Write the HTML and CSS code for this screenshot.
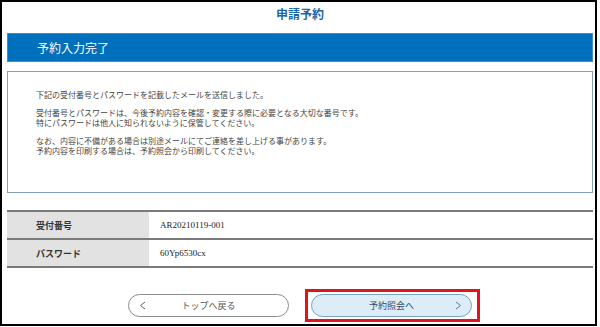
FILE: index.html
```html
<!DOCTYPE html>
<html lang="ja">
<head>
  <meta charset="UTF-8">
  <meta name="viewport" content="width=device-width, initial-scale=1.0">
  <title>申請予約</title>
  <link rel="stylesheet" href="styles.css">
</head>
<body>
  <div class="frame">
    <h1 class="page-title">申請予約</h1>

    <h2 class="bar">予約入力完了</h2>

    <div class="notice">
      <p>下記の受付番号とパスワードを記載したメールを送信しました。</p>
      <p>受付番号とパスワードは、今後予約内容を確認・変更する際に必要となる大切な番号です。<br>特にパスワードは他人に知られないように保管してください。</p>
      <p>なお、内容に不備がある場合は別途メールにてご連絡を差し上げる事があります。<br>予約内容を印刷する場合は、予約照会から印刷してください。</p>
    </div>

    <table class="result">
      <tr>
        <th>受付番号</th>
        <td>AR20210119-001</td>
      </tr>
      <tr>
        <th>パスワード</th>
        <td>60Yp6530cx</td>
      </tr>
    </table>

    <div class="actions">
      <a class="btn btn-back" href="#">
        <svg class="arrow" width="7" height="9" viewBox="0 0 7 9"><path d="M6 1 L1.5 4.5 L6 8" fill="none" stroke="currentColor" stroke-width="1"/></svg>
        トップへ戻る
      </a>
      <div class="highlight">
        <a class="btn btn-next" href="#">
          予約照会へ
          <svg class="arrow" width="7" height="9" viewBox="0 0 7 9"><path d="M1 1 L5.5 4.5 L1 8" fill="none" stroke="currentColor" stroke-width="1"/></svg>
        </a>
      </div>
    </div>
  </div>
</body>
</html>
```

FILE: styles.css
```css
body {
  margin: 0;
  background-color: #fff;
  font-family: "Noto Sans CJK JP", "Noto Sans", sans-serif;
  color: #333;
}

.frame {
  width: 597px;
  height: 326px;
  box-sizing: border-box;
  border: 2px solid #000;
  padding: 0 2px 0 5px;
}

.page-title {
  margin: 0;
  padding: 2px 0 9px;
  font-size: 12px;
  line-height: 20px;
  font-weight: bold;
  text-align: center;
  color: #1b66a8;
}

.bar {
  margin: 0;
  height: 29px;
  box-sizing: border-box;
  padding-left: 29px;
  font-size: 12px;
  font-weight: normal;
  line-height: 27px;
  color: #fff;
  background-color: #0070bd;
  border: 1px solid #3d8ccb;
}

.notice {
  margin-top: 9px;
  height: 122px;
  box-sizing: border-box;
  border: 1px solid #7fa2b8;
  padding: 18px 28px 0;
}

.notice p {
  margin: 0 0 8px;
  font-size: 8px;
  line-height: 10px;
  color: #444;
}

.result {
  width: 100%;
  margin-top: 17px;
  border-collapse: collapse;
  border-top: 2px solid #7a7a7a;
}

.result th,
.result td {
  height: 26px;
  padding: 0;
  border-bottom: 2px solid #7a7a7a;
  font-size: 9px;
  text-align: left;
}

.result th {
  width: 142px;
  padding-left: 29px;
  box-sizing: border-box;
  background-color: #e2e2e2;
  font-weight: bold;
  color: #333;
}

.result td {
  padding-left: 11px;
  font-family: "Liberation Serif", serif;
  color: #222;
}

.actions {
  display: flex;
  justify-content: center;
  gap: 22px;
  margin-top: 26px;
}

.btn {
  position: relative;
  display: block;
  width: 161px;
  height: 23px;
  box-sizing: border-box;
  border-radius: 12px;
  font-size: 9px;
  line-height: 21px;
  text-align: center;
  text-decoration: none;
}

.btn .arrow {
  position: absolute;
  top: 6px;
}

.btn-back {
  border: 1px solid #8c8c8c;
  background-color: #fff;
  color: #555;
}

.btn-back .arrow {
  left: 10px;
  color: #666;
}

.btn-next {
  border: 1px solid #7aa2bf;
  background-color: #dcedf8;
  color: #34495e;
}

.btn-next .arrow {
  right: 9px;
  color: #5a7d99;
}

.highlight {
  position: relative;
}

.highlight::after {
  content: "";
  position: absolute;
  top: -5px;
  left: -6px;
  right: -8px;
  bottom: -5px;
  border: 3px solid #e0141e;
}
```
